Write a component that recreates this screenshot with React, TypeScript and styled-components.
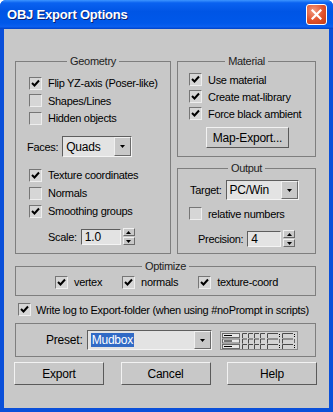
import React from 'react';
import styled, { createGlobalStyle } from 'styled-components';

const GlobalStyle = createGlobalStyle`
  html, body {
    margin: 0;
    padding: 0;
    background: #ffffff;
  }
  * {
    box-sizing: border-box;
  }
`;

const Window = styled.div`
  width: 333px;
  height: 412px;
  display: flex;
  flex-direction: column;
  background: #0a4fd9;
  border-radius: 6px 6px 0 0;
  overflow: hidden;
  font-family: 'Liberation Sans', Arial, sans-serif;
  font-size: 11px;
  letter-spacing: -0.3px;
  color: #000;
`;

const TitleBar = styled.div`
  height: 29px;
  flex: none;
  display: flex;
  align-items: center;
  justify-content: space-between;
  padding: 0 6px 0 7px;
  background: linear-gradient(
    to bottom,
    #3d95ff 0%,
    #0a62f0 10%,
    #0055e5 40%,
    #0058ea 80%,
    #0a5ff0 92%,
    #0041c8 100%
  );
`;

const Title = styled.span`
  color: #fff;
  font-weight: bold;
  font-size: 13px;
  letter-spacing: -0.2px;
  text-shadow: 1px 1px 0 #0a1f6e;
`;

const CloseButton = styled.div`
  width: 21px;
  height: 21px;
  border-radius: 3px;
  border: 1px solid #fff;
  background: radial-gradient(circle at 35% 30%, #f19a80 0%, #e0502a 55%, #c43c14 100%);
  display: flex;
  align-items: center;
  justify-content: center;
`;

const Body = styled.div`
  flex: 1;
  margin: 0 4px 4px;
  background: #c8c8c8;
  padding: 26px 13px 0 11px;
  display: flex;
  flex-direction: column;
`;

const TopRow = styled.div`
  display: flex;
  gap: 6px;
  align-items: stretch;
`;

const RightColumn = styled.div`
  width: 139px;
  display: flex;
  flex-direction: column;
  gap: 5px;
`;

const Group = styled.fieldset<{ $width?: number; $grow?: boolean }>`
  margin: 0;
  min-width: 0;
  border: 1px solid #7e7e7e;
  padding: 0;
  ${p => (p.$width ? `width: ${p.$width}px;` : '')}
  ${p => (p.$grow ? 'flex: 1;' : '')}
`;

const Legend = styled.legend`
  margin: 0 auto;
  padding: 0 3px;
  line-height: 13px;
  color: #222;
`;

const GroupInner = styled.div<{ $pad: string }>`
  padding: ${p => p.$pad};
  display: flex;
  flex-direction: column;
`;

const Row = styled.div<{ $h?: number; $indent?: number }>`
  height: ${p => p.$h ?? 17}px;
  display: flex;
  align-items: center;
  gap: 6px;
  padding-left: ${p => p.$indent ?? 0}px;
  white-space: nowrap;
`;

const Spacer = styled.div<{ $h: number }>`
  height: ${p => p.$h}px;
  flex: none;
`;

const Box = styled.span`
  width: 13px;
  height: 13px;
  flex: none;
  background: #d6d6d6;
  border-top: 1px solid #767676;
  border-left: 1px solid #767676;
  border-bottom: 1px solid #eeeeee;
  border-right: 1px solid #eeeeee;
  display: flex;
  align-items: center;
  justify-content: center;
`;

const Check: React.FC<{ checked?: boolean; label: string }> = ({ checked, label }) => (
  <>
    <Box>
      {checked && (
        <svg width="9" height="9" viewBox="0 0 9 9">
          <path d="M1 4 L3.5 6.5 L8 1.5" fill="none" stroke="#000" strokeWidth="2" />
        </svg>
      )}
    </Box>
    <span>{label}</span>
  </>
);

const Sunken = styled.div<{ $w: number; $h: number }>`
  width: ${p => p.$w}px;
  height: ${p => p.$h}px;
  flex: none;
  display: flex;
  align-items: stretch;
  background: #e3e3e3;
  border-top: 1px solid #5e5e5e;
  border-left: 1px solid #5e5e5e;
  border-bottom: 1px solid #f4f4f4;
  border-right: 1px solid #f4f4f4;
`;

const FieldText = styled.div`
  flex: 1;
  display: flex;
  align-items: center;
  padding-left: 3px;
  font-size: 12px;
  letter-spacing: -0.2px;
`;

const Highlight = styled.span`
  background: #316ac5;
  color: #fff;
  padding: 0 1px;
  line-height: 14px;
`;

const DropButton = styled.div`
  width: 17px;
  flex: none;
  background: #c8c8c8;
  border-top: 1px solid #f0f0f0;
  border-left: 1px solid #f0f0f0;
  border-bottom: 1px solid #6a6a6a;
  border-right: 1px solid #6a6a6a;
  display: flex;
  align-items: center;
  justify-content: center;
`;

const Arrow: React.FC<{ up?: boolean }> = ({ up }) => (
  <svg width="5" height="3" viewBox="0 0 5 3">
    <path d={up ? 'M0 3 L5 3 L2.5 0 Z' : 'M0 0 L5 0 L2.5 3 Z'} fill="#000" />
  </svg>
);

const Spin = styled.div`
  width: 12px;
  height: 17px;
  display: flex;
  flex-direction: column;
  gap: 1px;
  flex: none;
`;

const SpinButton = styled.div`
  flex: 1;
  background: #c8c8c8;
  border-top: 1px solid #f0f0f0;
  border-left: 1px solid #f0f0f0;
  border-bottom: 1px solid #6a6a6a;
  border-right: 1px solid #6a6a6a;
  display: flex;
  align-items: center;
  justify-content: center;
`;

const SpinnerRow = styled.div`
  height: 17px;
  display: flex;
  align-items: center;
  gap: 2px;
`;

const Spinner: React.FC<{ value: string; w: number }> = ({ value, w }) => (
  <SpinnerRow>
    <Sunken $w={w} $h={16}>
      <FieldText>{value}</FieldText>
    </Sunken>
    <Spin>
      <SpinButton>
        <Arrow up />
      </SpinButton>
      <SpinButton>
        <Arrow />
      </SpinButton>
    </Spin>
  </SpinnerRow>
);

const Button = styled.div<{ $w: number; $h: number }>`
  width: ${p => p.$w}px;
  height: ${p => p.$h}px;
  flex: none;
  display: flex;
  align-items: center;
  justify-content: center;
  background: #c8c8c8;
  border-top: 1px solid #f2f2f2;
  border-left: 1px solid #f2f2f2;
  border-bottom: 1px solid #5a5a5a;
  border-right: 1px solid #5a5a5a;
  font-size: 12px;
  letter-spacing: -0.2px;
`;

const OptimizeRow = styled.div`
  height: 22px;
  display: flex;
  align-items: center;
  justify-content: center;
  gap: 20px;
  padding: 0 0 4px 2px;
`;

const Item = styled.div`
  display: flex;
  align-items: center;
  gap: 6px;
`;

const LogRow = styled.div`
  height: 27px;
  display: flex;
  align-items: center;
  gap: 5px;
  padding-left: 3px;
  white-space: nowrap;
`;

const PresetBox = styled.div`
  height: 34px;
  border: 1px solid #7e7e7e;
  display: flex;
  align-items: center;
  padding-left: 30px;
  gap: 4px;
`;

const PresetLabel = styled.span`
  font-size: 12px;
  letter-spacing: -0.2px;
`;

const ToolbarSlot = styled.span`
  margin-left: 4px;
  display: flex;
`;

const ButtonRow = styled.div`
  display: flex;
  justify-content: space-between;
  margin: 5px -1px 0 -1px;
`;

const Toolbar: React.FC = () => {
  const rows = [0, 1, 2];
  return (
    <svg width="78" height="19" viewBox="0 0 78 19">
      <rect x="0.5" y="0.5" width="77" height="18" fill="#d4d4d4" stroke="#8a8a8a" />
      {rows.map(i => {
        const y = 2 + i * 5.5;
        return (
          <g key={i} stroke="#4a4a4a" strokeWidth="1" fill="none">
            <rect x="2.5" y={y + 0.5} width="17" height="4" fill="#e6e6e6" stroke="#6a6a6a" />
            <line x1="4" y1={y + 2.5} x2="12" y2={y + 2.5} stroke="#000" />
            {[0, 1, 2, 3].map(k => (
              <path key={k} d={`M${22.5 + k * 6} ${y + 5} V${y + 0.5} H${27 + k * 6}`} />
            ))}
            <path d={`M47.5 ${y + 5} V${y + 0.5} H58`} />
            <line x1="59.5" y1={y + 1} x2="59.5" y2={y + 2} stroke="#000" />
            <line x1="59.5" y1={y + 3} x2="59.5" y2={y + 4} stroke="#000" />
            <path d={`M62.5 ${y + 5} V${y + 0.5} H73`} />
            <line x1="74.5" y1={y + 1} x2="74.5" y2={y + 2} stroke="#000" />
            <line x1="74.5" y1={y + 3} x2="74.5" y2={y + 4} stroke="#000" />
          </g>
        );
      })}
    </svg>
  );
};

const App: React.FC = () => (
  <>
    <GlobalStyle />
    <Window>
      <TitleBar>
        <Title>OBJ Export Options</Title>
        <CloseButton>
          <svg width="11" height="11" viewBox="0 0 11 11">
            <path d="M1.5 1.5 L9.5 9.5 M9.5 1.5 L1.5 9.5" stroke="#fff" strokeWidth="2.2" strokeLinecap="square" />
          </svg>
        </CloseButton>
      </TitleBar>
      <Body>
        <TopRow>
          <Group $width={156}>
            <Legend>Geometry</Legend>
            <GroupInner $pad="6px 0 0 13px">
              <Row $h={18}><Check checked label="Flip YZ-axis (Poser-like)" /></Row>
              <Row $h={17}><Check label="Shapes/Lines" /></Row>
              <Row $h={18}><Check label="Hidden objects" /></Row>
              <Spacer $h={9} />
              <Row $h={21} $indent={0} style={{ marginLeft: -2, gap: 4 }}>
                <span>Faces:</span>
                <Sunken $w={70} $h={21}>
                  <FieldText>Quads</FieldText>
                  <DropButton><Arrow /></DropButton>
                </Sunken>
              </Row>
              <Spacer $h={9} />
              <Row $h={18}><Check checked label="Texture coordinates" /></Row>
              <Row $h={18}><Check label="Normals" /></Row>
              <Row $h={18}><Check checked label="Smoothing groups" /></Row>
              <Spacer $h={8} />
              <Row $h={17} $indent={19} style={{ gap: 4 }}>
                <span>Scale:</span>
                <Spinner value="1.0" w={40} />
              </Row>
              <Spacer $h={8} />
            </GroupInner>
          </Group>
          <RightColumn>
            <Group>
              <Legend>Material</Legend>
              <GroupInner $pad="3px 0 0 11px">
                <Row><Check checked label="Use material" /></Row>
                <Row><Check checked label="Create mat-library" /></Row>
                <Row><Check checked label="Force black ambient" /></Row>
                <Spacer $h={5} />
                <Button $w={83} $h={21} style={{ marginLeft: 17 }}>Map-Export...</Button>
                <Spacer $h={8} />
              </GroupInner>
            </Group>
            <Group $grow>
              <Legend>Output</Legend>
              <GroupInner $pad="5px 0 0 11px">
                <Row $h={20} $indent={1} style={{ gap: 4 }}>
                  <span>Target:</span>
                  <Sunken $w={73} $h={20}>
                    <FieldText>PC/Win</FieldText>
                    <DropButton><Arrow /></DropButton>
                  </Sunken>
                </Row>
                <Spacer $h={5} />
                <Row $h={17}><Check label="relative numbers" /></Row>
                <Spacer $h={8} />
                <Row $h={17} $indent={9} style={{ gap: 4 }}>
                  <span>Precision:</span>
                  <Spinner value="4" w={34} />
                </Row>
              </GroupInner>
            </Group>
          </RightColumn>
        </TopRow>
        <Group style={{ marginTop: 6 }}>
          <Legend>Optimize</Legend>
          <OptimizeRow>
            <Item><Check checked label="vertex" /></Item>
            <Item><Check checked label="normals" /></Item>
            <Item><Check checked label="texture-coord" /></Item>
          </OptimizeRow>
        </Group>
        <LogRow>
          <Check checked label="Write log to Export-folder (when using #noPrompt in scripts)" />
        </LogRow>
        <PresetBox>
          <PresetLabel>Preset:</PresetLabel>
          <Sunken $w={125} $h={20}>
            <FieldText><Highlight>Mudbox</Highlight></FieldText>
            <DropButton><Arrow /></DropButton>
          </Sunken>
          <ToolbarSlot>
            <Toolbar />
          </ToolbarSlot>
        </PresetBox>
        <ButtonRow>
          <Button $w={90} $h={23}>Export</Button>
          <Button $w={90} $h={23}>Cancel</Button>
          <Button $w={90} $h={23}>Help</Button>
        </ButtonRow>
      </Body>
    </Window>
  </>
);

export default App;
